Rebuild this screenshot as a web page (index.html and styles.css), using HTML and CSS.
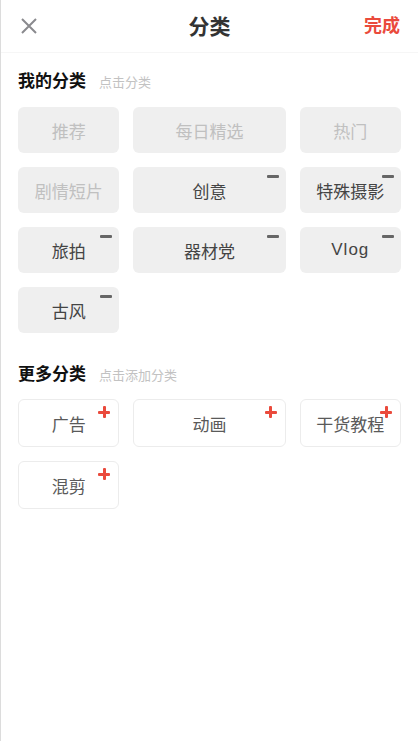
FILE: index.html
```html
<!DOCTYPE html>
<html lang="zh">
<head>
<meta charset="utf-8">
<link rel="stylesheet" href="styles.css">
</head>
<body>
<div class="page">
  <header class="header">
    <svg class="close" width="18" height="18" viewBox="0 0 18 18"><path d="M2 2 L16 16 M16 2 L2 16" stroke="#8a8a8e" stroke-width="2" fill="none"/></svg>
    <div class="title">分类</div>
    <div class="done">完成</div>
  </header>

  <section class="section">
    <div class="sec-head"><span class="sec-title">我的分类</span><span class="sec-hint">点击分类</span></div>
    <div class="grid">
      <div class="tile fixed">推荐</div>
      <div class="tile fixed">每日精选</div>
      <div class="tile fixed">热门</div>
      <div class="tile fixed">剧情短片</div>
      <div class="tile">创意<i class="minus"></i></div>
      <div class="tile">特殊摄影<i class="minus"></i></div>
      <div class="tile">旅拍<i class="minus"></i></div>
      <div class="tile">器材党<i class="minus"></i></div>
      <div class="tile latin">Vlog<i class="minus"></i></div>
      <div class="tile">古风<i class="minus"></i></div>
    </div>
  </section>

  <section class="section more">
    <div class="sec-head"><span class="sec-title">更多分类</span><span class="sec-hint">点击添加分类</span></div>
    <div class="grid">
      <div class="tile add">广告<i class="plus"></i></div>
      <div class="tile add">动画<i class="plus"></i></div>
      <div class="tile add">干货教程<i class="plus"></i></div>
      <div class="tile add">混剪<i class="plus"></i></div>
    </div>
  </section>
</div>
</body>
</html>
```

FILE: styles.css
```css
* { box-sizing: border-box; }
html, body { margin: 0; padding: 0; background: #fff; }
body {
  font-family: "Liberation Sans", "Noto Sans CJK SC", sans-serif;
  color: #333;
}
.page {
  min-height: 741px;
  border-left: 1px solid #dcdcdc;
}
.header {
  height: 53px;
  display: flex;
  align-items: center;
  justify-content: space-between;
  padding: 0 18px 0 19px;
  border-bottom: 1px solid #f6f6f6;
  position: relative;
}
.close { display: block; }
.title {
  position: absolute;
  left: 0; right: 0;
  text-align: center;
  font-size: 21px;
  font-weight: 700;
  color: #333;
  line-height: 53px;
  pointer-events: none;
}
.done {
  font-size: 18px;
  font-weight: 700;
  color: #ea4a3c;
  line-height: 1;
}
.section { padding: 0 17px; }
.sec-head {
  display: flex;
  align-items: baseline;
  height: 20px;
  margin-top: 19px;
  margin-bottom: 15px;
}
.more .sec-head { margin-top: 32px; margin-bottom: 14px; }
.sec-title {
  font-size: 17px;
  font-weight: 700;
  color: #111;
  line-height: 20px;
}
.sec-hint {
  font-size: 13px;
  color: #c2c2c2;
  margin-left: 13px;
}
.grid {
  display: grid;
  grid-template-columns: 2fr 3fr 2fr;
  gap: 14px;
}
.tile {
  position: relative;
  height: 46px;
  background: #efefef;
  border-radius: 6px;
  display: flex;
  align-items: center;
  justify-content: center;
  font-size: 17px;
  color: #444;
}
.tile.latin { letter-spacing: 1px; }
.tile.fixed { color: #c0c0c0; }
.tile.add {
  background: #fff;
  border: 1px solid #ececec;
  color: #5a5a5a;
  height: 48px;
}
.minus {
  position: absolute;
  top: 8px;
  right: 7px;
  width: 12px;
  height: 3px;
  background: #666;
  border-radius: 1px;
}
.plus {
  position: absolute;
  top: 6px;
  right: 8px;
  width: 12px;
  height: 12px;
}
.plus::before, .plus::after {
  content: "";
  position: absolute;
  background: #ea4a3c;
  border-radius: 1px;
}
.plus::before { left: 0; top: 4.5px; width: 12px; height: 3px; }
.plus::after { top: 0; left: 4.5px; width: 3px; height: 12px; }
```
